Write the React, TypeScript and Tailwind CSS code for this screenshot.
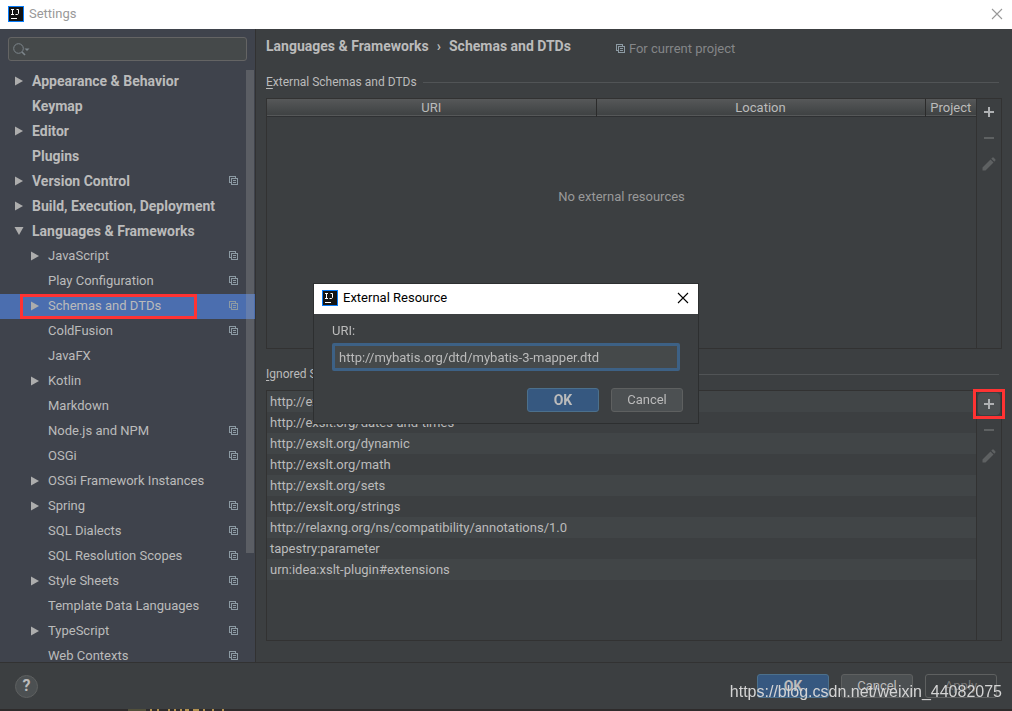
import clsx from "clsx";

type TreeItem = {
  label: string;
  level: 0 | 1;
  arrow?: "right" | "down";
  project?: boolean;
  selected?: boolean;
};

const TREE: TreeItem[] = [
  { label: "Appearance & Behavior", level: 0, arrow: "right" },
  { label: "Keymap", level: 0 },
  { label: "Editor", level: 0, arrow: "right" },
  { label: "Plugins", level: 0 },
  { label: "Version Control", level: 0, arrow: "right", project: true },
  { label: "Build, Execution, Deployment", level: 0, arrow: "right" },
  { label: "Languages & Frameworks", level: 0, arrow: "down" },
  { label: "JavaScript", level: 1, arrow: "right", project: true },
  { label: "Play Configuration", level: 1, project: true },
  { label: "Schemas and DTDs", level: 1, arrow: "right", project: true, selected: true },
  { label: "ColdFusion", level: 1, project: true },
  { label: "JavaFX", level: 1 },
  { label: "Kotlin", level: 1, arrow: "right" },
  { label: "Markdown", level: 1 },
  { label: "Node.js and NPM", level: 1, project: true },
  { label: "OSGi", level: 1, project: true },
  { label: "OSGi Framework Instances", level: 1, arrow: "right" },
  { label: "Spring", level: 1, arrow: "right", project: true },
  { label: "SQL Dialects", level: 1, project: true },
  { label: "SQL Resolution Scopes", level: 1, project: true },
  { label: "Style Sheets", level: 1, arrow: "right", project: true },
  { label: "Template Data Languages", level: 1, project: true },
  { label: "TypeScript", level: 1, arrow: "right", project: true },
  { label: "Web Contexts", level: 1, project: true },
];

const IGNORED = [
  "http://exslt.org/common",
  "http://exslt.org/dates-and-times",
  "http://exslt.org/dynamic",
  "http://exslt.org/math",
  "http://exslt.org/sets",
  "http://exslt.org/strings",
  "http://relaxng.org/ns/compatibility/annotations/1.0",
  "tapestry:parameter",
  "urn:idea:xslt-plugin#extensions",
];

function IdeaLogo() {
  return (
    <svg width="16" height="16" viewBox="0 0 16 16" className="shrink-0" aria-hidden="true">
      <rect width="16" height="16" fill="#087cfa" />
      <rect x="1" y="1" width="14" height="14" fill="#141414" />
      <path d="M3 3.5h3M4.5 3.5v5M3 8.5h3M8.5 3.5h2v4l-0.8 1H7.5" fill="none" stroke="#fff" />
      <path d="M3 12.5h6" stroke="#fff" />
    </svg>
  );
}

function ProjectIcon() {
  return (
    <svg width="10" height="10" viewBox="0 0 10 10" className="shrink-0" fill="none" stroke="#8c9aa3" shapeRendering="crispEdges" aria-hidden="true">
      <path d="M2 6.5H0.5V0.5H6.5V2" />
      <path d="M2.5 2.5h6v6h-6zM4 4.5h3M4 6.5h3" />
    </svg>
  );
}

function Arrow({ dir }: { dir?: "right" | "down" }) {
  return (
    <svg width="10" height="10" viewBox="0 0 10 10" className="shrink-0" fill="#adadad" aria-hidden="true">
      {dir === "right" && <path d="M1 0.5L9 5L1 9.5z" />}
      {dir === "down" && <path d="M0.5 1H9.5L5 9z" />}
    </svg>
  );
}

function CloseIcon({ color }: { color: string }) {
  return (
    <svg width="12" height="12" viewBox="0 0 12 12" fill="none" stroke={color} strokeWidth="1.1" aria-hidden="true">
      <path d="M1 1L11 11M11 1L1 11" />
    </svg>
  );
}

function Toolbar({ marked }: { marked?: boolean }) {
  return (
    <div className="flex w-[25px] shrink-0 flex-col items-center gap-1 border-l border-[#323232] pt-[2px]">
      <button
        aria-label="Add"
        className={clsx("relative flex h-[22px] w-[22px] items-center justify-center rounded-sm", marked && "bg-[#4c5052]")}
      >
        <svg width="10" height="10" viewBox="0 0 10 10" fill="#afb1b3">
          <path d="M4 0h2v4h4v2H6v4H4V6H0V4h4z" />
        </svg>
        {/* highlight frame */}
        {marked && <span className="pointer-events-none absolute -inset-x-[5px] -inset-y-1 border-3 border-[#ff3333]" />}
      </button>
      <button aria-label="Remove" disabled className="flex h-[22px] w-[22px] items-center justify-center">
        <svg width="10" height="2" viewBox="0 0 10 2" fill="#5e6162">
          <path d="M0 0h10v2H0z" />
        </svg>
      </button>
      <button aria-label="Edit" disabled className="flex h-[22px] w-[22px] items-center justify-center">
        <svg width="14" height="14" viewBox="0 0 14 14" fill="#5e6162">
          <path d="M0.5 13.5V10.5L8.5 2.5L11.5 5.5L3.5 13.5zM9.3 1.7L10.4 0.6Q11 0.2 11.6 0.6L13.4 2.4Q13.8 3 13.4 3.6L12.3 4.7z" />
        </svg>
      </button>
    </div>
  );
}

function Legend({ first, rest }: { first: string; rest: string }) {
  return (
    <div className="flex h-5 shrink-0 items-center gap-[6px] pr-[3px]">
      <h2 className="text-xs whitespace-nowrap">
        <span className="underline underline-offset-2">{first}</span>
        {rest}
      </h2>
      <span className="h-px flex-1 bg-[#515456]" />
    </div>
  );
}

function Sidebar() {
  return (
    <aside className="relative flex w-64 shrink-0 flex-col overflow-hidden border-r border-[#323232] bg-[#3f434c]">
      <label className="mx-2 mt-2 flex h-6 w-[239px] shrink-0 items-center rounded-[3px] border border-[#646464] bg-[#45494a] pl-1">
        <svg width="17" height="14" viewBox="0 0 17 14" fill="none" stroke="#7d868c" aria-hidden="true">
          <circle cx="5.5" cy="6.5" r="4.8" />
          <path d="M9 10l3 3" strokeWidth="1.6" />
          <path d="M11.5 6.5h5L14 9z" fill="#7d868c" stroke="none" />
        </svg>
        <input aria-label="Search settings" className="min-w-0 flex-1 bg-transparent outline-none" />
      </label>
      <div className="mt-2 h-0 min-h-0 flex-1 overflow-hidden">
        <ul>
          {TREE.map((item) => (
            <li key={item.label}>
              <a
                href="#"
                className={clsx(
                  "relative flex h-[25px] items-center gap-2 pr-4 pb-[2px]",
                  item.level === 0 ? "pl-[14px] text-sm font-bold" : "pl-[30px]",
                  item.selected && "bg-[#4b6eaf]"
                )}
              >
                <Arrow dir={item.arrow} />
                <span className="flex-1 whitespace-nowrap">{item.label}</span>
                {item.project && <ProjectIcon />}
                {item.selected && (
                  <span className="pointer-events-none absolute inset-y-0 left-5 w-[177px] border-3 border-[#ff3333]" />
                )}
              </a>
            </li>
          ))}
        </ul>
      </div>
      {/* scrollbar thumb */}
      <span className="absolute top-[41px] right-[1px] bottom-[109px] w-2 bg-[#a6a6a6]/28" />
    </aside>
  );
}

function ExternalResourceDialog() {
  return (
    <div className="fixed inset-0 flex items-center justify-center pb-1">
      <div role="dialog" aria-label="External Resource" className="w-96 bg-[#3c3f41] shadow-[0_0_0_1px_#2d2f30]">
        <div className="flex h-[30px] items-center gap-[5px] bg-white pr-[9px] pb-[2px] pl-2 text-black">
          <IdeaLogo />
          <span className="flex-1">External Resource</span>
          <button aria-label="Close dialog">
            <CloseIcon color="#000" />
          </button>
        </div>
        <div className="px-[18px] pt-2 pb-[11px]">
          <label htmlFor="uri" className="block h-[21px] leading-[18px]">
            URI:
          </label>
          <input
            id="uri"
            defaultValue="http://mybatis.org/dtd/mybatis-3-mapper.dtd"
            className="block h-7 w-full rounded-[2px] border-3 border-[#3d6185] bg-[#45494a] px-1 outline-none"
          />
          <div className="mt-[17px] -mr-[3px] flex justify-end gap-3">
            <DialogButton label="OK" kind="primary" />
            <DialogButton label="Cancel" kind="normal" />
          </div>
        </div>
      </div>
    </div>
  );
}

function DialogButton({ label, kind }: { label: string; kind: "primary" | "normal" | "disabled" }) {
  return (
    <button
      disabled={kind === "disabled"}
      className={clsx(
        "h-6 w-[72px] rounded-[3px] border text-center leading-[22px]",
        kind === "primary" && "border-[#4c708c] bg-[#365880] text-sm leading-[22px] font-bold",
        kind === "normal" && "border-[#5e6060] bg-[#4c5052]",
        kind === "disabled" && "border-[#5e6060] text-[#777777]"
      )}
    >
      {label}
    </button>
  );
}

export default function App() {
  return (
    <div className="relative flex h-screen flex-col overflow-hidden bg-[#3c3f41] font-[Roboto,sans-serif] text-[13px] text-[#bbbbbb]">
      <header className="flex h-[29px] shrink-0 items-center gap-[5px] bg-white pr-[9px] pb-[2px] pl-2 text-[#999999]">
        <IdeaLogo />
        <span className="flex-1">Settings</span>
        <button aria-label="Close">
          <CloseIcon color="#999999" />
        </button>
      </header>

      <div className="flex min-h-0 flex-1">
        <Sidebar />

        <main className="flex min-w-0 flex-1 flex-col pr-[10px] pb-[21px] pl-[10px]">
          <div className="flex h-[43px] shrink-0 items-center pb-[9px]">
            <h1 className="flex gap-2 text-sm font-bold whitespace-nowrap">
              <span>Languages &amp; Frameworks</span>
              <span>›</span>
              <span>Schemas and DTDs</span>
            </h1>
            <p className="ml-[45px] flex items-center gap-[3px] pt-[5px] text-[#848688]">
              <ProjectIcon />
              For current project
            </p>
          </div>

          <section className="flex min-h-0 flex-1 flex-col">
            <Legend first="E" rest="xternal Schemas and DTDs" />
            <div className="mt-[6px] flex min-h-0 flex-1 border border-[#323232]">
              <div className="min-w-0 flex-1">
                <table className="w-full table-fixed">
                  <thead>
                    <tr className="h-[17px] border-b border-[#2f3133] bg-linear-to-b from-[#565859] to-[#3f4243] leading-[15px]">
                      <th className="border-r border-[#2b2b2b] pt-px font-normal">URI</th>
                      <th className="border-r border-[#2b2b2b] pt-px font-normal">Location</th>
                      <th className="w-[51px] pt-px font-normal">Project</th>
                    </tr>
                  </thead>
                  <tbody>
                    <tr>
                      <td colSpan={3} className="pt-[70px] text-center text-[#999999]">
                        No external resources
                      </td>
                    </tr>
                  </tbody>
                </table>
              </div>
              <Toolbar />
            </div>
          </section>

          <section className="mt-[15px] flex min-h-0 flex-1 flex-col">
            <Legend first="I" rest="gnored Schemas and DTDs" />
            <div className="mt-[6px] flex min-h-0 flex-1 border border-[#323232]">
              <ul className="min-w-0 flex-1">
                {IGNORED.map((uri) => (
                  <li key={uri} className="h-[21px] pl-[3px] leading-[22px] odd:bg-[#414547]">
                    {uri}
                  </li>
                ))}
              </ul>
              <Toolbar marked />
            </div>
          </section>
        </main>
      </div>

      <footer className="flex h-[47px] shrink-0 items-center gap-3 border-t border-[#323232] pr-[15px] pl-[15px]">
        <button
          aria-label="Help"
          className="h-[23px] w-[23px] rounded-full border border-[#5e6060] bg-[#4c5052] text-base leading-5 font-bold"
        >
          ?
        </button>
        <span className="flex-1" />
        <DialogButton label="OK" kind="primary" />
        <DialogButton label="Cancel" kind="normal" />
        <DialogButton label="Apply" kind="disabled" />
      </footer>

      {/* sliver of the editor behind the window */}
      <div className="h-[2px] shrink-0 bg-[#2e2b2b]">
        <svg width="240" height="2" viewBox="0 0 240 2" className="block" aria-hidden="true">
          <path d="M128 0h18v2h-18z" fill="#52503a" />
          <path d="M150 1h2M157 1h2M168 1h2M174 1h2M180 1h2M185 1h4M193 1h6M203 1h2M212 1h2M222 1h2" stroke="#b3914f" strokeWidth="2" />
        </svg>
      </div>

      <ExternalResourceDialog />

      <p className="pointer-events-none absolute right-[10px] bottom-[7px] font-['Liberation_Sans',sans-serif] text-base text-[#d4d4d4]">
        https://blog.csdn.net/weixin_44082075
      </p>
    </div>
  );
}
